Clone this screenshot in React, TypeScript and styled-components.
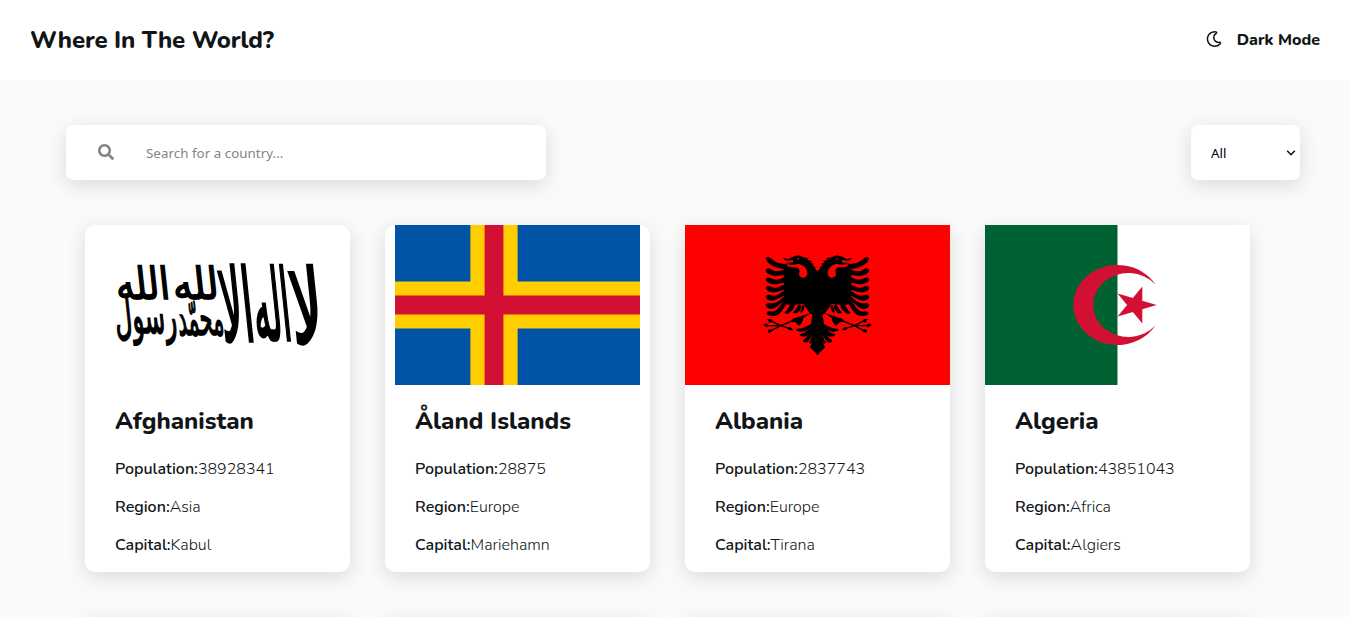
import React from "react";
import styled, { createGlobalStyle } from "styled-components";
import { FaSearch, FaRegMoon } from "react-icons/fa";

const GlobalStyle = createGlobalStyle`
  * { box-sizing: border-box; margin: 0; padding: 0; }
  body { height: 617px; overflow: hidden; background: #fafafa; color: #111517; font-family: Nunito, Lato, sans-serif; font-size: 16px; }
`;

const shadow = "0 5px 20px rgba(0, 0, 0, 0.13)";

const Header = styled.header`
  display: flex; align-items: center; justify-content: space-between;
  height: 80px; padding: 0 30px; background: #fff;
`;
const Brand = styled.h1`
  font-size: 24px; line-height: 33px; font-weight: 800; white-space: nowrap; letter-spacing: -0.16px;
`;
const ThemeToggle = styled.button`
  display: flex; align-items: center; gap: 15px; border: 0; background: none; color: inherit;
  font: 800 16px/22px Nunito, Lato, sans-serif;
  svg { margin-bottom: 2px; }
`;
const Toolbar = styled.section`
  display: flex; justify-content: space-between; padding: 45px 50px 45px 66px;
`;
const Search = styled.label`
  display: flex; align-items: center; width: 480px; height: 55px; padding-left: 32px; gap: 32px;
  color: #848484; background: #fff; border-radius: 7px; box-shadow: ${shadow};
  svg { margin-bottom: 2px; }
`;
const Input = styled.input`
  flex: 1; border: 0; outline: 0; background: none; font: 13.333px "Noto Sans", sans-serif; letter-spacing: 0.04px;
  &::placeholder { color: #848484; }
`;
const SelectBox = styled.div`
  display: grid; align-items: center; width: 109px; height: 55px; border-radius: 7px;
  background: #fff; box-shadow: ${shadow};
  > * { grid-area: 1 / 1; }
  > svg { justify-self: end; margin-right: 4px; pointer-events: none; }
`;
const Select = styled.select`
  appearance: none; width: 100%; height: 100%; padding: 0 20px; border: 0; border-radius: 7px; color: #000;
  background: transparent; font: 13.333px "Noto Sans", sans-serif;
`;
const Grid = styled.main`
  display: grid; grid-template-columns: repeat(4, 265px); gap: 45px 35px; padding-left: 85px;
`;
const Card = styled.article`
  height: 347px; border-radius: 10px; background: #fff; box-shadow: ${shadow};
`;
const Flag = styled.svg`display: block; width: 265px; height: 160px;`;
const Details = styled.div`display: flex; flex-direction: column; padding: 20px 30px;`;
const Name = styled.h2`font-size: 24px; line-height: 33px; font-weight: 800; white-space: nowrap;`;
const Facts = styled.dl`display: flex; flex-direction: column; gap: 16px; margin-top: 20px;`;
const Fact = styled.div`display: flex; line-height: 22px; white-space: nowrap;`;
const Label = styled.dt`font-weight: 600;`;
const Value = styled.dd`font-weight: 300;`;
const Script = styled.text`
  font-family: "DejaVu Sans", sans-serif; font-size: 20px; font-weight: 400; text-anchor: middle;
  fill: #000; stroke: #000; stroke-width: 0.7px;
`;

/* Words of the inscription: centre x, baseline y, width and vertical stretch. */
const inscription = [
  { word: "لا", x: 225, y: 118, width: 32, stretch: 5.1 },
  { word: "اله", x: 190, y: 115, width: 37, stretch: 4.9 },
  { word: "الا", x: 155, y: 116, width: 33, stretch: 5 },
  { word: "لله", x: 112, y: 74, width: 46, stretch: 2.2 },
  { word: "محمّد", x: 117, y: 110, width: 46, stretch: 2.4 },
  { word: "رسول", x: 62, y: 108, width: 62, stretch: 2.5 },
  { word: "الله", x: 59, y: 74, width: 54, stretch: 2.2 },
];

const Afghanistan = () => (
  <Flag viewBox="0 0 265 160">
    {inscription.map(({ word, x, y, width, stretch }) => (
      <Script key={`${x}-${y}`} transform={`translate(${x} ${y}) skewX(6) scale(1 ${stretch})`} textLength={width} lengthAdjust="spacingAndGlyphs">{word}</Script>
    ))}
  </Flag>
);
const Aland = () => (
  <Flag viewBox="0 0 265 160">
    <path fill="#0053a5" d="M10 0h245v160H10z" />
    <path fill="#ffce00" d="M85.4 0h47.2v160H85.4zM10 56.4h245v47.2H10z" />
    <path fill="#d21034" d="M99.6 0h18.8v160H99.6zM10 70.6h245v18.8H10z" />
  </Flag>
);

const EagleHalf = () => (
  <>
    <path d="M205 95L202 94L196 86L193 78L186 79L191 72L180 67L187 64L172 59L176 55L160 52L146 46L128 50L116 57L98 54L106 61L115 62L112 67L122 70L105 71L100 77L103 190L120 196L160 192L181 221L186 226L182 262L190 300L180 322L202 344H205Z" />
    <path d="M48 53C55 47 63 56 73 63C84 71 96 69 108 73V88C91 87 77 84 65 76C55 69 47 61 48 53Z" />
    <path d="M48 89C55 80 62 88 72 92C83 96 94 90 108 90V104C91 104 80 111 65 106C53 102 45 95 48 89Z" />
    <path d="M48 116C54 108 62 115 72 118C84 122 93 114 108 112V128C92 127 80 136 65 132C54 129 45 122 48 116Z" />
    <path d="M48 142C54 134 63 141 73 143C85 145 94 135 108 132V149C92 148 82 159 65 157C54 155 45 148 48 142Z" />
    <path d="M48 168C54 160 63 167 74 167C86 166 94 155 108 151V168C93 167 82 181 65 182C53 182 45 174 48 168Z" />
    <path d="M48 193C54 185 63 191 73 189C86 187 93 173 108 168V182C93 184 82 204 66 207C55 208 45 200 48 193Z" />
    <path d="M50 218C56 210 64 217 74 213C88 207 93 188 106 181L113 188C103 198 95 220 80 226C67 231 48 226 50 218Z" />
    <path d="M105 216C112 212 116 199 125 190L134 195C133 206 122 219 112 221C106 222 102 219 105 216ZM130 215C137 211 141 200 147 192L154 197C154 208 144 220 136 220C131 220 128 218 130 215ZM151 214C155 208 155 200 157 194L163 198C164 209 157 219 152 218Z" />
    <path d="M182 219L152 229L128 236L121 247L135 246L147 258L158 246L160 234Z" />
    <path d="M138 267C145 264 153 267 160 263L174 257L192 246V262C178 264 170 273 160 275C150 276 137 273 138 267ZM150 282C160 281 166 276 173 270L194 258V275C178 276 175 289 163 290C156 291 149 288 150 282ZM160 299C168 297 171 288 178 281L194 270V286C181 287 181 301 171 307C164 310 156 304 160 299ZM176 308C182 304 181 294 190 285L194 297L184 312Z" />
    <path d="M128 242L92 257L61 241M128 269L92 257H48M92 257L61 273" fill="none" stroke="#000" strokeWidth="4" />
    <path d="M70 246L55 248L57 243L50 237L63 237ZM58 257L50 262L39 255L49 250ZM73 267L65 276L54 279L55 269ZM108 261L122 262L128 271L117 270Z" />
    <path fill="red" d="M112 71C124 77 136 73 145 72C158 74 171 83 172 98C173 117 148 117 147 103C147 96 152 93 145 85C140 78 126 85 112 79ZM139 55L150 56L144 59ZM186 223C173 220 154 242 155 253C157 263 169 257 177 248C183 240 190 229 186 223Z" />
    <path d="M112 62L129 60L129 67L118 69Z" fill="#d8100c" />
  </>
);
const Albania = () => (
  <Flag viewBox="0 0 265 160">
    <path fill="red" d="M0 0h265v160H0z" />
    <g transform="translate(65 15) scale(.33333)">
      <EagleHalf />
      <g transform="translate(405 0) scale(-1 1)"><EagleHalf /></g>
    </g>
  </Flag>
);
const Algeria = () => (
  <Flag viewBox="0 0 265 160">
    <path fill="#fff" d="M132 0h133v160H132z" />
    <path fill="#006233" d="M0 0h132.5v160H0z" />
    <path fill="#d21034" d="M170.4 59.4A44.2 40 0 1 0 170.4 100.6A35.3 32 0 1 1 170.4 59.4ZM171.7 80L132.6 68.5L157.3 98.5V61.5L132.6 91.5Z" />
  </Flag>
);

const countries = [
  { name: "Afghanistan", population: "38928341", region: "Asia", capital: "Kabul", Art: Afghanistan },
  { name: "Åland Islands", population: "28875", region: "Europe", capital: "Mariehamn", Art: Aland },
  { name: "Albania", population: "2837743", region: "Europe", capital: "Tirana", Art: Albania },
  { name: "Algeria", population: "43851043", region: "Africa", capital: "Algiers", Art: Algeria },
];

export default function App() {
  return (
    <>
      <GlobalStyle />
      <Header>
        <Brand>Where In The World?</Brand>
        <ThemeToggle><FaRegMoon size={16} />Dark Mode</ThemeToggle>
      </Header>
      <Toolbar>
        <Search><FaSearch size={16} /><Input placeholder="Search for a country..." /></Search>
        <SelectBox>
          <Select><option>All</option></Select>
          <svg width="10" height="8" viewBox="0 0 10 8" fill="none" stroke="#111" strokeWidth="1.6"><path d="M1.2 1.7L5 5.7L8.8 1.7" /></svg>
        </SelectBox>
      </Toolbar>
      <Grid>
        {countries.map(({ name, population, region, capital, Art }) => (
          <Card key={name}>
            <Art />
            <Details>
              <Name>{name}</Name>
              <Facts>
                <Fact><Label>Population:</Label><Value>{population}</Value></Fact>
                <Fact><Label>Region:</Label><Value>{region}</Value></Fact>
                <Fact><Label>Capital:</Label><Value>{capital}</Value></Fact>
              </Facts>
            </Details>
          </Card>
        ))}
        {countries.map(({ name }) => <Card key={`${name}-next`} />)}
      </Grid>
    </>
  );
}
